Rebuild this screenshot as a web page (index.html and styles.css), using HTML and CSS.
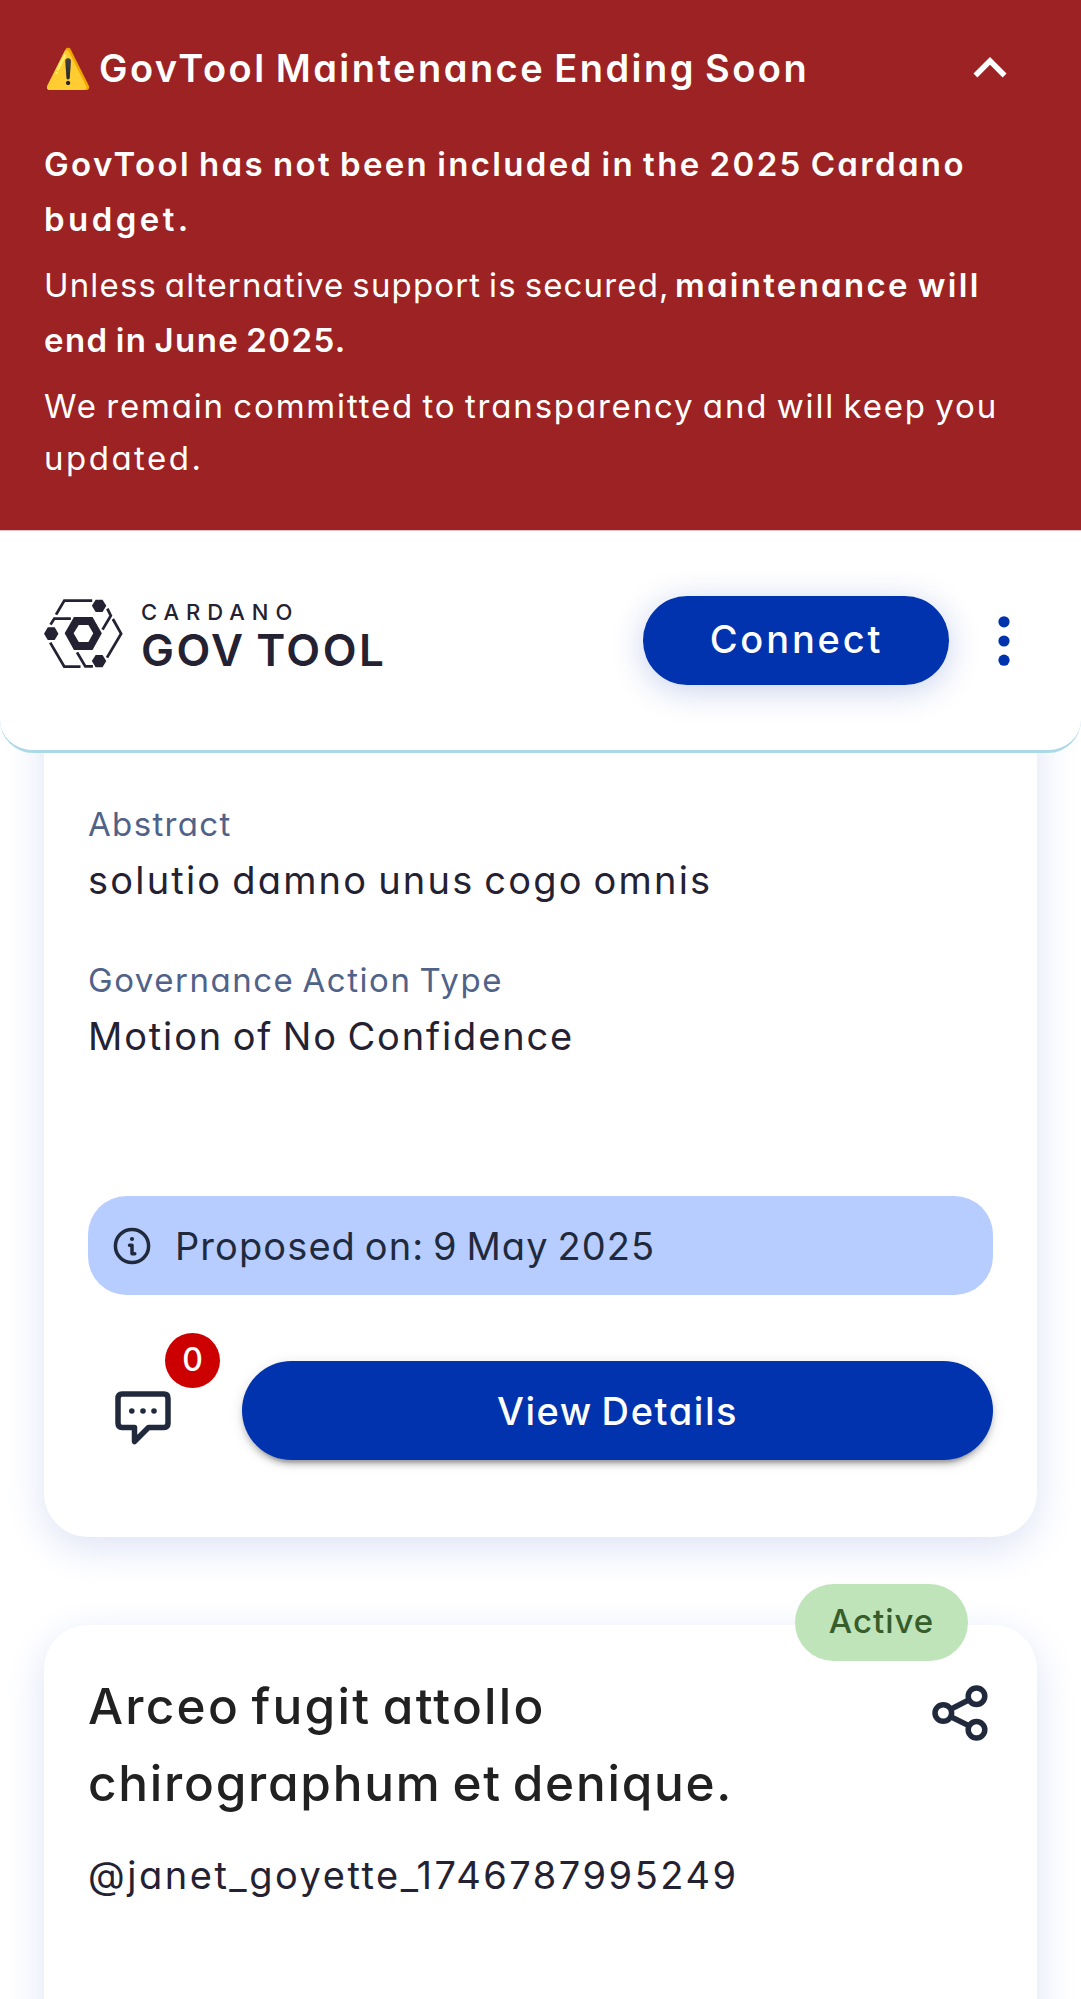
FILE: index.html
```html
<!DOCTYPE html>
<html lang="en">
<head>
<meta charset="utf-8">
<title>GovTool</title>
<link rel="stylesheet" href="styles.css">
</head>
<body>
<section class="banner">
  <div class="banner-head">
    <h1 class="banner-title"><span class="emoji">⚠️</span><span class="t1">GovTool Maintenance Ending Soon</span></h1>
    <svg class="chevron" viewBox="0 0 24 24"><path d="m12 8-6 6 1.41 1.41L12 10.83l4.59 4.58L18 14z"/></svg>
  </div>
  <p class="para strong"><span class="t2">GovTool has not been included in the 2025 Cardano</span><br><span class="t3">budget.</span></p>
  <p class="para"><span class="t4">Unless alternative support is secured,</span> <b class="t5">maintenance will</b><br><b class="t6">end in June 2025.</b></p>
  <p class="para last"><span class="t7">We remain committed to transparency and will keep you</span><br><span class="t8">updated.</span></p>
</section>
<header class="header">
  <div class="logo">
    <svg class="logo-mark" viewBox="128 177 228 207" preserveAspectRatio="none">
      <g class="logo-line">
        <path d="M163 224 187 182H268"/><path d="M147 254 158 236H206"/><path d="M312 206 322 227 298 269"/>
        <path d="M328 237 352 281 311 353"/><path d="M146 308 187 380H234"/><path d="M224 337 248 379H270"/>
      </g>
      <path d="M278 179h20l11 18-11 19h-20l-11-19zM139 262h20l11 19-11 19h-20l-11-19zM278 345h20l11 18-11 19h-20l-11-19z"/>
      <path fill-rule="evenodd" d="M215 231h54l27 49-27 50h-54l-27-50zM229 255 214 280 229 306H257L271 280 257 255z"/>
    </svg>
    <div class="logo-text"><div class="logo-small"><span class="t9">CARDANO</span></div><div class="logo-big"><span class="t10">GOV TOOL</span></div></div>
  </div>
  <div class="header-actions">
    <button class="connect"><span class="t11">Connect</span></button>
    <svg class="dots" viewBox="0 0 12 50"><circle cx="6" cy="5.8" r="5.6"/><circle cx="6" cy="25" r="5.6"/><circle cx="6" cy="44.2" r="5.6"/></svg>
  </div>
</header>
<main class="content">
  <article class="card card-first">
    <div class="label"><span class="t12">Abstract</span></div>
    <div class="value"><span class="t13">solutio damno unus cogo omnis</span></div>
    <div class="label label-next"><span class="t14">Governance Action Type</span></div>
    <div class="value value-next"><span class="t15">Motion of No Confidence</span></div>
    <div class="proposed">
      <svg class="info" viewBox="0 0 38 38"><circle cx="19" cy="19" r="16.6"/><path class="info-i" d="M16.5 18.300h2.500v8.400h2.800"/><circle class="info-dot" cx="19" cy="12" r="2.100"/></svg>
      <span class="t16">Proposed on: 9 May 2025</span>
    </div>
    <div class="actions">
      <div class="comments">
        <svg class="comment-icon" viewBox="0 0 56 54"><path d="M7 3H49Q53 3 53 7.500V32Q53 36.500 49 36.500H33.500L19.500 50.500V36.500H7Q3 36.500 3 32V7.500Q3 3 7 3Z"/><g><circle cx="16.800" cy="20" r="2.800"/><circle cx="28" cy="20" r="2.800"/><circle cx="39" cy="20" r="2.800"/></g></svg>
        <span class="badge">0</span>
      </div>
      <button class="details"><span class="t17">View Details</span></button>
    </div>
  </article>
  <article class="card card-second">
    <span class="chip"><span class="t18">Active</span></span>
    <div class="title-row">
      <h2 class="card-title"><span class="t19">Arceo fugit attollo</span><br><span class="t20">chirographum et denique.</span></h2>
      <svg class="share" viewBox="0 0 56 56"><path d="M11.300 28 44.500 11M11.300 28 44.500 44.500"/><circle cx="11.300" cy="28" r="8.300"/><circle cx="44.500" cy="11.200" r="8.300"/><circle cx="44.500" cy="44.800" r="8.300"/></svg>
    </div>
    <div class="author"><span class="t21">@janet_goyette_1746787995249</span></div>
  </article>
</main>
</body>
</html>
```
FILE: styles.css
```css
* { box-sizing: border-box; }
body { margin: 0; background: #fff; font-family: Inter, "Open Sans", sans-serif; font-feature-settings: "cv11" 1; color: #242232; font-size: 38px; word-spacing: -3px; white-space: nowrap; }
h1, h2, p { margin: 0; font-weight: inherit; }
button { border: 0; padding: 0; font: inherit; font-feature-settings: inherit; word-spacing: inherit; color: #fff; background: #0033ad; font-weight: 500; }
svg { display: block; flex: none; }

.banner { height: 531px; padding: 35px 44px 0; background: #9c2224; color: #fff; border-bottom: 1px solid #e3c0c3; }
.banner-head { display: flex; justify-content: space-between; align-items: center; height: 66px; padding-right: 14px; margin-bottom: 35.5px; }
.banner-title { display: flex; align-items: center; font-size: 38px; font-weight: 600; line-height: 66px; }
.emoji { width: 55px; font-size: 38.5px; }
.chevron { width: 66px; height: 66px; fill: #fff; }
.para { margin-bottom: 11px; font-size: 33px; line-height: 55px; word-spacing: -2.6px; }
.para b, .strong { font-weight: 600; }
.para.last { margin-top: 12.5px; line-height: 52px; }

.header { position: relative; z-index: 2; display: flex; justify-content: space-between; align-items: center; height: 222px; padding: 0 71.5px 0 44px; background: #fff; border-bottom: 3px solid #add8e6; border-radius: 0 0 33px 33px; }
.logo { display: flex; align-items: flex-start; gap: 18.5px; height: 69px; margin-bottom: 15px; color: #242232; }
.logo-mark { width: 78.5px; height: 69px; fill: #242232; }
.logo-line { fill: none; stroke: #242232; stroke-width: 8; }
.logo-small { font-size: 22px; line-height: 26px; font-weight: 500; }
.logo-big { margin-top: 2.4px; font-size: 44px; line-height: 46px; font-weight: 600; }
.header-actions { display: flex; align-items: center; gap: 49px; }
.connect { width: 305.5px; height: 88.5px; padding-bottom: 3px; border-radius: 44.25px; box-shadow: 0 5.5px 33px rgba(0, 51, 173, .22); }
.dots { width: 12px; height: 50px; fill: #0033ad; }

.content { height: 1346px; margin-top: -100px; overflow: hidden; }
.card { position: relative; margin: 0 44px; padding: 0 44px; border-radius: 44px; background: #fff; box-shadow: 0 11px 41px #dde3f5; }
.card-first { height: 884px; padding-top: 146.5px; }
.label { font-size: 33px; line-height: 49.5px; word-spacing: -2.6px; color: #506288; }
.value { margin-top: 2px; line-height: 58px; }
.label-next { margin-top: 47px; }
.value-next { margin-top: 1.5px; }
.proposed { display: flex; align-items: center; gap: 23px; height: 99px; margin-top: 131px; padding-left: 25px; border-radius: 38.5px; background: #b8cdff; color: #212a3d; }
.info { width: 38px; height: 38px; fill: none; stroke: #212a3d; stroke-width: 3.5; stroke-linecap: round; stroke-linejoin: round; }
.info .info-dot { fill: #212a3d; stroke: none; }
.actions { display: flex; margin-top: 66px; }
.comments { position: relative; width: 154px; padding: 30px 0 0 27px; }
.comment-icon { width: 56px; height: 54px; fill: none; stroke: #212a3d; stroke-width: 5.5; stroke-linejoin: round; }
.comment-icon g { fill: #212a3d; stroke: none; }
.badge { position: absolute; left: 77px; top: -28px; width: 55px; height: 55px; border-radius: 50%; background: #c00; color: #fff; font-size: 32px; font-weight: 500; line-height: 54px; text-align: center; }
.details { flex: 1; height: 99px; border-radius: 49.5px; box-shadow: 0 8.25px 2.75px -5.5px rgba(0,0,0,.2), 0 5.5px 5.5px rgba(0,0,0,.14), 0 2.75px 13.75px rgba(0,0,0,.12); }

.card-second { height: 500px; margin-top: 88px; padding-top: 43px; }
.chip { position: absolute; right: 69px; top: -41.5px; width: 173px; height: 77px; border-radius: 38.5px; background: #c0e4ba; color: #365d2a; font-size: 33px; font-weight: 500; line-height: 75px; text-align: center; }
.title-row { display: flex; justify-content: space-between; align-items: flex-start; padding-right: 5px; }
.card-title { font-size: 49.5px; line-height: 77px; font-weight: 500; word-spacing: -4px; color: #212121; }
.share { width: 56px; height: 56px; margin-top: 17px; fill: #fff; stroke: #212a3d; stroke-width: 5.5; }
.author { margin-top: 24px; line-height: 58px; }

/* Tracking per text run */
.t1 { letter-spacing: 2.476px; }
.t2 { letter-spacing: 2.341px; }
.t3 { letter-spacing: 3.436px; }
.t4 { letter-spacing: 1.152px; }
.t5 { letter-spacing: 2.291px; margin-left: -1.5px; }
.t6 { letter-spacing: 1.416px; }
.t7 { letter-spacing: 1.819px; }
.t8 { letter-spacing: 2.485px; }
.t9 { letter-spacing: 6.93px; }
.t10 { letter-spacing: 2.5px; }
.t11 { letter-spacing: 2.854px; margin-right: -1.5px; }
.t12 { letter-spacing: 1.338px; }
.t13 { letter-spacing: 2.198px; }
.t14 { letter-spacing: 1.523px; }
.t15 { letter-spacing: 1.859px; }
.t16 { letter-spacing: 1.09px; margin-left: 1px; }
.t17 { letter-spacing: 1.581px; }
.t18 { letter-spacing: 1.01px; }
.t19 { letter-spacing: 2.251px; }
.t20 { letter-spacing: 1.745px; }
.t21 { letter-spacing: 2.52px; }
```
